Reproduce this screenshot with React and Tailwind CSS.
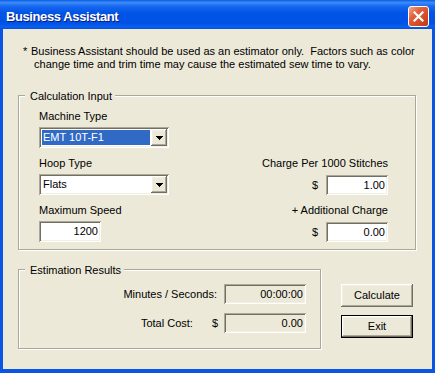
import React from "react";

const sunken =
  "shadow-[inset_1px_1px_0_#aca899,inset_-1px_-1px_0_#ffffff,inset_2px_2px_0_#716f64,inset_-2px_-2px_0_#f1efe2]";
const raised =
  "shadow-[inset_-1px_-1px_0_#716f64,inset_1px_1px_0_#ffffff,inset_-2px_-2px_0_#aca899,inset_2px_2px_0_#f1efe2]";

function GroupBox({ title, className, children }) {
  return (
    <div
      className={`flex flex-col border border-[#aca899] shadow-[inset_1px_1px_0_#ffffff,1px_1px_0_#ffffff] ${className}`}
    >
      <div className="-mt-[6px] ml-[6px] w-fit bg-[#ece9d8] pl-[5px] pr-[3px]">
        {title}
      </div>
      {children}
    </div>
  );
}

function Arrow() {
  return (
    <svg width="7" height="4" viewBox="0 0 7 4" shapeRendering="crispEdges">
      <rect x="0" y="0" width="7" height="1" fill="#000" />
      <rect x="1" y="1" width="5" height="1" fill="#000" />
      <rect x="2" y="2" width="3" height="1" fill="#000" />
      <rect x="3" y="3" width="1" height="1" fill="#000" />
    </svg>
  );
}

function Combo({ value, selected }) {
  return (
    <div className={`flex h-[21px] w-[130px] bg-white p-[2px] ${sunken}`}>
      <div
        className={`m-[1px] flex flex-1 items-center pl-[1px] ${
          selected ? "bg-[#316ac5] text-white" : ""
        }`}
      >
        {value}
      </div>
      <div
        className={`flex w-[16px] items-center justify-center bg-[#ece9d8] ${raised}`}
      >
        <Arrow />
      </div>
    </div>
  );
}

function Field({ value, className, gray }) {
  return (
    <div
      className={`flex items-center justify-end pl-[3px] pr-[3px] ${
        gray ? "bg-[#ece9d8]" : "bg-white"
      } ${sunken} ${className}`}
    >
      {value}
    </div>
  );
}

export default function App() {
  return (
    <div className="flex h-[373px] w-[435px] flex-col font-['Liberation_Sans',Arial,sans-serif] text-[11px] leading-[13px] text-black">
      {/* title bar */}
      <div className="flex h-[29px] shrink-0 items-center justify-between bg-[linear-gradient(180deg,#0a5ce8_0%,#3d8cf7_9%,#1767f0_22%,#0054e6_45%,#0052e5_80%,#0860f2_92%,#0a4fd8_100%)] pl-[6px] pr-[6px] pt-[3px]">
        <span className="text-[13px] font-bold leading-[15px] tracking-[-0.4px] text-white [text-shadow:1px_1px_0_#0a1a7a]">
          Business Assistant
        </span>
        <div className="flex h-[21px] w-[21px] items-center justify-center rounded-[3px] border border-white bg-[linear-gradient(135deg,#f2a88c_0%,#e2603a_35%,#cf4622_75%,#b9391a_100%)]">
          <svg width="11" height="11" viewBox="0 0 11 11">
            <path
              d="M1.5 1.5l8 8M9.5 1.5l-8 8"
              stroke="#fff"
              strokeWidth="2.2"
              strokeLinecap="square"
            />
          </svg>
        </div>
      </div>

      {/* client area */}
      <div className="flex flex-1 flex-col border-x-[3px] border-b-[4px] border-[#0a55e5] bg-[#ece9d8]">
        <div className="flex pl-[20px] pt-[16px]">
          <span className="w-[8px]">*</span>
          <p className="whitespace-pre">
            {"Business Assistant should be used as an estimator only.  Factors such as color\n change time and trim time may cause the estimated sew time to vary."}
          </p>
        </div>

        <GroupBox title="Calculation Input" className="ml-[15px] mt-[24px] w-[398px]">
          <div className="flex flex-col pb-[7px] pl-[20px] pr-[27px]">
            <div className="mt-[7px]">Machine Type</div>
            <div className="mt-[4px]">
              <Combo value="EMT 10T-F1" selected />
            </div>

            <div className="mt-[9px] flex justify-between">
              <div className="flex flex-col">
                <div>Hoop Type</div>
                <div className="mt-[4px]">
                  <Combo value="Flats" />
                </div>
              </div>
              <div className="flex flex-col items-end">
                <div>Charge Per 1000 Stitches</div>
                <div className="mt-[5px] flex items-center">
                  <span className="mr-[8px]">$</span>
                  <Field className="h-[20px] w-[62px]" value="1.00" />
                </div>
              </div>
            </div>

            <div className="mt-[9px] flex justify-between">
              <div className="flex flex-col">
                <div>Maximum Speed</div>
                <div className="mt-[4px]">
                  <Field className="h-[21px] w-[62px]" value="1200" />
                </div>
              </div>
              <div className="flex flex-col items-end">
                <div>+ Additional Charge</div>
                <div className="mt-[5px] flex items-center">
                  <span className="mr-[8px]">$</span>
                  <Field className="h-[20px] w-[62px]" value="0.00" />
                </div>
              </div>
            </div>
          </div>
        </GroupBox>

        <div className="ml-[15px] mt-[19px] flex items-start">
          <GroupBox title="Estimation Results" className="w-[303px]">
            <div className="flex flex-col pb-[15px] pr-[14px]">
              <div className="mt-[7px] flex items-center justify-end">
                <span className="mr-[7px]">Minutes / Seconds:</span>
                <Field gray className="h-[20px] w-[82px]" value="00:00:00" />
              </div>
              <div className="mt-[9px] flex items-center justify-end">
                <span className="mr-[19px]">Total Cost:</span>
                <span className="mr-[6px]">$</span>
                <Field gray className="h-[20px] w-[82px]" value="0.00" />
              </div>
            </div>
          </GroupBox>

          <div className="ml-[20px] mt-[15px] flex flex-col gap-[8px]">
            <button
              className={`flex h-[23px] w-[72px] items-center justify-center bg-[#ece9d8] ${raised}`}
            >
              Calculate
            </button>
            <button
              className={`flex h-[23px] w-[72px] items-center justify-center border border-black bg-[#ece9d8] ${raised}`}
            >
              Exit
            </button>
          </div>
        </div>
      </div>
    </div>
  );
}
